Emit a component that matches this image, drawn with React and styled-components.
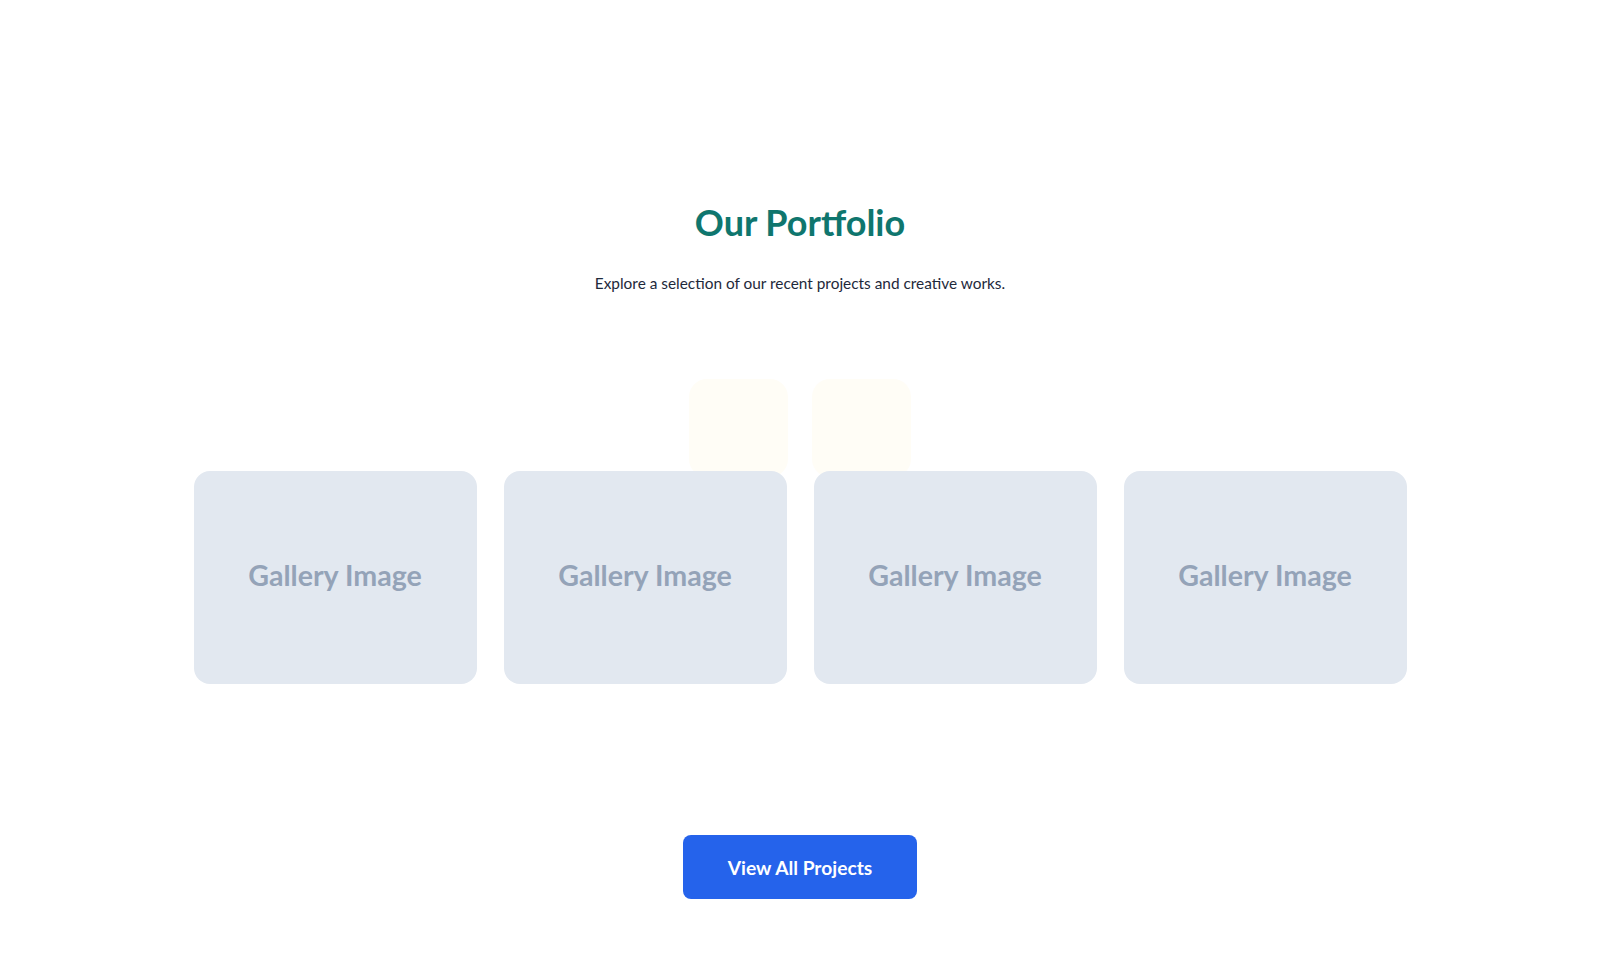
import styled, { createGlobalStyle } from "styled-components";

const GlobalStyle = createGlobalStyle`
  body {
    margin: 0;
    background: #ffffff;
    font-family: Lato, "Noto Sans", sans-serif;
  }
`;

const projects = ["Gallery Image", "Gallery Image", "Gallery Image", "Gallery Image"];

function App() {
  return (
    <>
      <GlobalStyle />
      <Section>
        <Title>Our Portfolio</Title>
        <Lead>Explore a selection of our recent projects and creative works.</Lead>
        <Filters>
          <Chip />
          <Chip />
        </Filters>
        <Gallery>
          {projects.map((p, i) => (
            <Card key={i}>{p}</Card>
          ))}
        </Gallery>
        <Cta>View All Projects</Cta>
      </Section>
    </>
  );
}

export default App;

const Section = styled.section`
  display: flex;
  flex-direction: column;
  align-items: center;
  padding: 200px 0 80px;
`;

const Title = styled.h2`
  margin: 0;
  font-size: 36px;
  line-height: 44px;
  font-weight: 700;
  color: #0f766e;
`;

const Lead = styled.p`
  margin: 27px 0 0;
  font-size: 15.4px;
  line-height: 24px;
  color: #1e293b;
`;

const Filters = styled.div`
  display: flex;
  gap: 24px;
  margin-top: 84px;
  margin-bottom: -6px;
`;

const Chip = styled.div`
  width: 99px;
  height: 98px;
  border-radius: 18px;
  background: #fffdf6;
`;

const Gallery = styled.div`
  position: relative;
  z-index: 1;
  display: grid;
  grid-template-columns: repeat(4, 283px);
  gap: 27px;
`;

const Card = styled.div`
  height: 213px;
  padding-bottom: 6px;
  box-sizing: border-box;
  border-radius: 16px;
  background: #e2e8f0;
  display: flex;
  align-items: center;
  justify-content: center;
  font-family: Lato, sans-serif;
  font-weight: 700;
  font-size: 28.6px;
  color: #94a3b8;
`;

const Cta = styled.button`
  margin-top: 151px;
  width: 234px;
  height: 64px;
  border: none;
  border-radius: 8px;
  background: #2563eb;
  color: #ffffff;
  font-family: Lato, "Noto Sans", sans-serif;
  font-size: 19.2px;
  font-weight: 700;
  cursor: pointer;
`;
